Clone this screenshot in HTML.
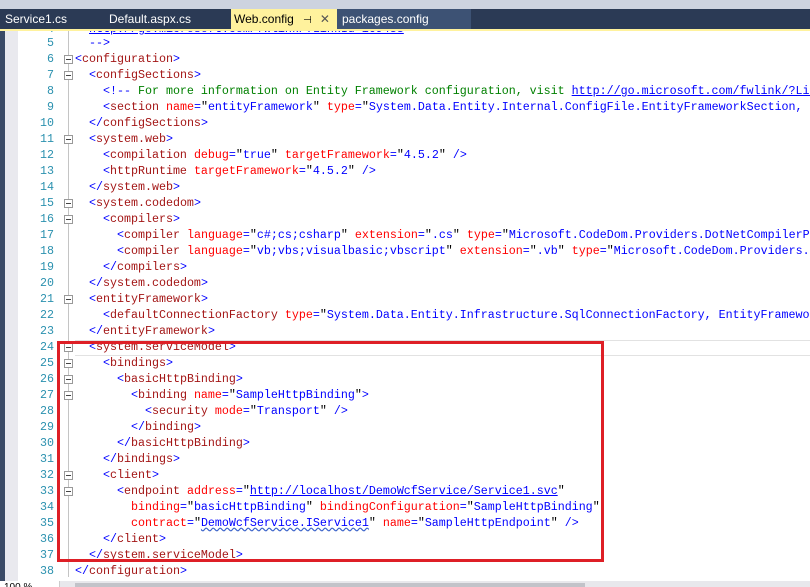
<!DOCTYPE html>
<html><head><meta charset="utf-8"><style>
html,body{margin:0;padding:0;width:810px;height:587px;overflow:hidden;background:#fff;font-family:"Liberation Sans",sans-serif;}
#top{position:absolute;left:0;top:0;width:810px;height:9px;background:#cdd3df;}
#tabs{position:absolute;left:0;top:9px;width:810px;height:20px;background:#2b3a55;}
.tab{position:absolute;top:0;height:20px;line-height:20px;font-size:12px;color:#fff;}
#yl{position:absolute;left:0;top:29px;width:810px;height:2px;background:#fff29d;}
#gut1{position:absolute;left:0;top:31px;width:5px;height:550px;background:#3a4a66;}
#gut2{position:absolute;left:5px;top:31px;width:13px;height:550px;background:#e9e9ee;}
#code{position:absolute;left:0;top:31px;width:810px;height:550px;overflow:hidden;}
.ln{position:absolute;left:0;width:810px;height:16px;font-family:"Liberation Mono",monospace;font-size:11.67px;line-height:16px;white-space:pre;}
.num{position:absolute;left:18px;width:36px;text-align:right;color:#2b91af;}
.tx{position:absolute;left:75px;}
.fb{position:absolute;left:64px;top:4px;width:7px;height:7px;border:1px solid #999;background:#fff;}
.fb:after{content:"";position:absolute;left:1px;top:3px;width:5px;height:1px;background:#444;}
.b{color:#0000ff}.t{color:#a31515}.a{color:#ff0000}.v{color:#0000ff}.c{color:#008000}.u{text-decoration:underline;color:#0000ff}
#vline{position:absolute;left:68px;top:0px;width:1px;height:546px;background:#c4c4c4;}
#red{position:absolute;left:57px;top:341px;width:541px;height:215px;border:3px solid #de1f26;}
#hl{position:absolute;left:75px;width:735px;height:14px;border-top:1px solid #e2e2e2;border-bottom:1px solid #e2e2e2;}
#bot{position:absolute;left:0;top:581px;width:810px;height:6px;background:#e8e8ec;}
</style></head><body>
<div id="code">
<div id="vline"></div>
<div id="hl" style="top:309px"></div>
</div>
<div id="top"></div>
<div id="tabs">
<div class="tab" style="left:5px">Service1.cs</div>
<div class="tab" style="left:109px">Default.aspx.cs</div>
<div class="tab" style="left:231px;width:106px;background:#fff29d;color:#000;padding-left:3px;box-sizing:border-box">Web.config <span style="margin-left:6px;font-size:10px">&#x22A3;</span><span style="margin-left:8px;color:#555">&#x2715;</span></div>
<div class="tab" style="left:337px;width:134px;background:#3d5274;padding-left:5px;box-sizing:border-box">packages.config</div>
</div>
<div id="yl"></div>
<div id="gut1"></div><div id="gut2"></div>
<div id="lines" style="position:absolute;left:0;top:0;width:810px;height:581px;overflow:hidden;clip-path:inset(31px 0 0 0)">
<div class="ln" style="top:21px"><span class="num">4</span><span class="tx">  <span class="u">http://go.microsoft.com/fwlink/?LinkId=169433</span></span></div>
<div class="ln" style="top:35px"><span class="num">5</span><span class="tx">  <span class="b">--&gt;</span></span></div>
<div class="ln" style="top:51px"><span class="num">6</span><i class="fb"></i><span class="tx"><span class="b">&lt;</span><span class="t">configuration</span><span class="b">&gt;</span></span></div>
<div class="ln" style="top:67px"><span class="num">7</span><i class="fb"></i><span class="tx">  <span class="b">&lt;</span><span class="t">configSections</span><span class="b">&gt;</span></span></div>
<div class="ln" style="top:83px"><span class="num">8</span><span class="tx">    <span class="b">&lt;!--</span><span class="c"> For more information on Entity Framework configuration, visit </span><span class="u">http://go.microsoft.com/fwlink/?LinkID=237468</span></span></div>
<div class="ln" style="top:99px"><span class="num">9</span><span class="tx">    <span class="b">&lt;</span><span class="t">section</span> <span class="a">name</span><span class="b">=</span>"<span class="v">entityFramework</span>" <span class="a">type</span><span class="b">=</span>"<span class="v">System.Data.Entity.Internal.ConfigFile.EntityFrameworkSection, EntityFramework</span></span></div>
<div class="ln" style="top:115px"><span class="num">10</span><span class="tx">  <span class="b">&lt;/</span><span class="t">configSections</span><span class="b">&gt;</span></span></div>
<div class="ln" style="top:131px"><span class="num">11</span><i class="fb"></i><span class="tx">  <span class="b">&lt;</span><span class="t">system.web</span><span class="b">&gt;</span></span></div>
<div class="ln" style="top:147px"><span class="num">12</span><span class="tx">    <span class="b">&lt;</span><span class="t">compilation</span> <span class="a">debug</span><span class="b">=</span>"<span class="v">true</span>" <span class="a">targetFramework</span><span class="b">=</span>"<span class="v">4.5.2</span>" <span class="b">/&gt;</span></span></div>
<div class="ln" style="top:163px"><span class="num">13</span><span class="tx">    <span class="b">&lt;</span><span class="t">httpRuntime</span> <span class="a">targetFramework</span><span class="b">=</span>"<span class="v">4.5.2</span>" <span class="b">/&gt;</span></span></div>
<div class="ln" style="top:179px"><span class="num">14</span><span class="tx">  <span class="b">&lt;/</span><span class="t">system.web</span><span class="b">&gt;</span></span></div>
<div class="ln" style="top:195px"><span class="num">15</span><i class="fb"></i><span class="tx">  <span class="b">&lt;</span><span class="t">system.codedom</span><span class="b">&gt;</span></span></div>
<div class="ln" style="top:211px"><span class="num">16</span><i class="fb"></i><span class="tx">    <span class="b">&lt;</span><span class="t">compilers</span><span class="b">&gt;</span></span></div>
<div class="ln" style="top:227px"><span class="num">17</span><span class="tx">      <span class="b">&lt;</span><span class="t">compiler</span> <span class="a">language</span><span class="b">=</span>"<span class="v">c#;cs;csharp</span>" <span class="a">extension</span><span class="b">=</span>"<span class="v">.cs</span>" <span class="a">type</span><span class="b">=</span>"<span class="v">Microsoft.CodeDom.Providers.DotNetCompilerPlatform</span></span></div>
<div class="ln" style="top:243px"><span class="num">18</span><span class="tx">      <span class="b">&lt;</span><span class="t">compiler</span> <span class="a">language</span><span class="b">=</span>"<span class="v">vb;vbs;visualbasic;vbscript</span>" <span class="a">extension</span><span class="b">=</span>"<span class="v">.vb</span>" <span class="a">type</span><span class="b">=</span>"<span class="v">Microsoft.CodeDom.Providers.</span></span></div>
<div class="ln" style="top:259px"><span class="num">19</span><span class="tx">    <span class="b">&lt;/</span><span class="t">compilers</span><span class="b">&gt;</span></span></div>
<div class="ln" style="top:275px"><span class="num">20</span><span class="tx">  <span class="b">&lt;/</span><span class="t">system.codedom</span><span class="b">&gt;</span></span></div>
<div class="ln" style="top:291px"><span class="num">21</span><i class="fb"></i><span class="tx">  <span class="b">&lt;</span><span class="t">entityFramework</span><span class="b">&gt;</span></span></div>
<div class="ln" style="top:307px"><span class="num">22</span><span class="tx">    <span class="b">&lt;</span><span class="t">defaultConnectionFactory</span> <span class="a">type</span><span class="b">=</span>"<span class="v">System.Data.Entity.Infrastructure.SqlConnectionFactory, EntityFramework</span></span></div>
<div class="ln" style="top:323px"><span class="num">23</span><span class="tx">  <span class="b">&lt;/</span><span class="t">entityFramework</span><span class="b">&gt;</span></span></div>
<div class="ln" style="top:339px"><span class="num">24</span><i class="fb"></i><span class="tx">  <span class="b">&lt;</span><span class="t">system.serviceModel</span><span class="b">&gt;</span></span></div>
<div class="ln" style="top:355px"><span class="num">25</span><i class="fb"></i><span class="tx">    <span class="b">&lt;</span><span class="t">bindings</span><span class="b">&gt;</span></span></div>
<div class="ln" style="top:371px"><span class="num">26</span><i class="fb"></i><span class="tx">      <span class="b">&lt;</span><span class="t">basicHttpBinding</span><span class="b">&gt;</span></span></div>
<div class="ln" style="top:387px"><span class="num">27</span><i class="fb"></i><span class="tx">        <span class="b">&lt;</span><span class="t">binding</span> <span class="a">name</span><span class="b">=</span>"<span class="v">SampleHttpBinding</span>"<span class="b">&gt;</span></span></div>
<div class="ln" style="top:403px"><span class="num">28</span><span class="tx">          <span class="b">&lt;</span><span class="t">security</span> <span class="a">mode</span><span class="b">=</span>"<span class="v">Transport</span>" <span class="b">/&gt;</span></span></div>
<div class="ln" style="top:419px"><span class="num">29</span><span class="tx">        <span class="b">&lt;/</span><span class="t">binding</span><span class="b">&gt;</span></span></div>
<div class="ln" style="top:435px"><span class="num">30</span><span class="tx">      <span class="b">&lt;/</span><span class="t">basicHttpBinding</span><span class="b">&gt;</span></span></div>
<div class="ln" style="top:451px"><span class="num">31</span><span class="tx">    <span class="b">&lt;/</span><span class="t">bindings</span><span class="b">&gt;</span></span></div>
<div class="ln" style="top:467px"><span class="num">32</span><i class="fb"></i><span class="tx">    <span class="b">&lt;</span><span class="t">client</span><span class="b">&gt;</span></span></div>
<div class="ln" style="top:483px"><span class="num">33</span><i class="fb"></i><span class="tx">      <span class="b">&lt;</span><span class="t">endpoint</span> <span class="a">address</span><span class="b">=</span>"<span class="u">http://localhost/DemoWcfService/Service1.svc</span>"</span></div>
<div class="ln" style="top:499px"><span class="num">34</span><span class="tx">        <span class="a">binding</span><span class="b">=</span>"<span class="v">basicHttpBinding</span>" <span class="a">bindingConfiguration</span><span class="b">=</span>"<span class="v">SampleHttpBinding</span>"</span></div>
<div class="ln" style="top:515px"><span class="num">35</span><span class="tx">        <span class="a">contract</span><span class="b">=</span>"<span class="v" style="text-decoration:underline wavy #3a63c9">DemoWcfService.IService1</span>" <span class="a">name</span><span class="b">=</span>"<span class="v">SampleHttpEndpoint</span>" <span class="b">/&gt;</span></span></div>
<div class="ln" style="top:531px"><span class="num">36</span><span class="tx">    <span class="b">&lt;/</span><span class="t">client</span><span class="b">&gt;</span></span></div>
<div class="ln" style="top:547px"><span class="num">37</span><span class="tx">  <span class="b">&lt;/</span><span class="t">system.serviceModel</span><span class="b">&gt;</span></span></div>
<div class="ln" style="top:563px"><span class="num">38</span><span class="tx"><span class="b">&lt;/</span><span class="t">configuration</span><span class="b">&gt;</span></span></div>
</div>
<div id="red"></div>
<div id="bot"><div style="position:absolute;left:0;top:0;width:60px;height:6px;background:#fff;border-right:1px solid #ccc;overflow:hidden;font-size:10px;line-height:14px;padding-left:4px;box-sizing:border-box">100 %</div><div style="position:absolute;left:75px;top:2px;width:510px;height:4px;background:#c2c3c9"></div></div>
</body></html>
